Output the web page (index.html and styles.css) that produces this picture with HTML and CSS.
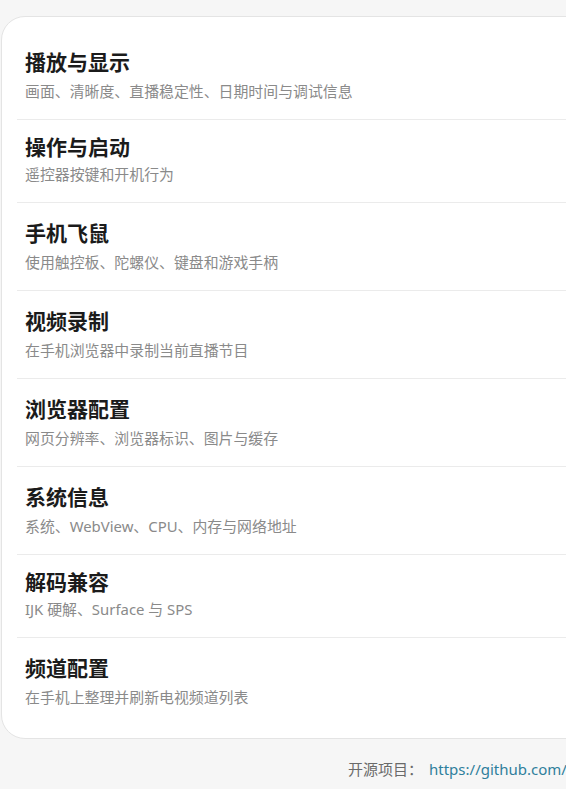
FILE: index.html
```html
<!DOCTYPE html>
<html lang="zh-CN">
<head>
<meta charset="utf-8">
<title>设置</title>
<link rel="stylesheet" href="styles.css">
</head>
<body>
<div class="page">
  <section class="card">
    <div class="row">
      <div class="title">播放与显示</div>
      <div class="sub">画面、清晰度、直播稳定性、日期时间与调试信息</div>
    </div>
    <div class="row compact">
      <div class="title">操作与启动</div>
      <div class="sub">遥控器按键和开机行为</div>
    </div>
    <div class="row">
      <div class="title">手机飞鼠</div>
      <div class="sub">使用触控板、陀螺仪、键盘和游戏手柄</div>
    </div>
    <div class="row">
      <div class="title">视频录制</div>
      <div class="sub">在手机浏览器中录制当前直播节目</div>
    </div>
    <div class="row">
      <div class="title">浏览器配置</div>
      <div class="sub">网页分辨率、浏览器标识、图片与缓存</div>
    </div>
    <div class="row">
      <div class="title">系统信息</div>
      <div class="sub">系统、WebView、CPU、内存与网络地址</div>
    </div>
    <div class="row compact">
      <div class="title">解码兼容</div>
      <div class="sub">IJK 硬解、Surface 与 SPS</div>
    </div>
    <div class="row">
      <div class="title">频道配置</div>
      <div class="sub">在手机上整理并刷新电视频道列表</div>
    </div>
  </section>
  <footer class="footer">开源项目：<span class="link">https://github.com/</span></footer>
</div>
</body>
</html>
```
FILE: styles.css
```css
html, body {
  margin: 0;
  padding: 0;
  background: #f6f6f6;
  font-family: "Noto Sans", "Noto Sans CJK SC", sans-serif;
  overflow: hidden;
}

.page {
  width: 566px;
  height: 789px;
  overflow: hidden;
  padding-top: 16px;
  box-sizing: border-box;
}

.card {
  width: 620px;
  margin-left: 1px;
  background: #ffffff;
  border: 1px solid #e4e4e4;
  border-radius: 24px;
  padding: 15px 0 13px 15px;
  box-sizing: border-box;
}

.row {
  padding: 16px 0 18px 8px;
  border-top: 1px solid #ebebeb;
}

.row:first-child {
  border-top: none;
}

.title {
  font-size: 21px;
  font-weight: 700;
  line-height: 28px;
  color: #1b1b1b;
}

.sub {
  margin-top: 5px;
  font-size: 14.9px;
  line-height: 20px;
  color: #8a8a8a;
}

.row.compact {
  padding-top: 13px;
}

.row.compact .sub {
  margin-top: 3px;
}

.footer {
  margin-top: 20px;
  padding-left: 348px;
  font-size: 15px;
  line-height: 20px;
  color: #6a6a6a;
  white-space: nowrap;
}

.link {
  margin-left: 6px;
  color: #2f7f9c;
}
```
